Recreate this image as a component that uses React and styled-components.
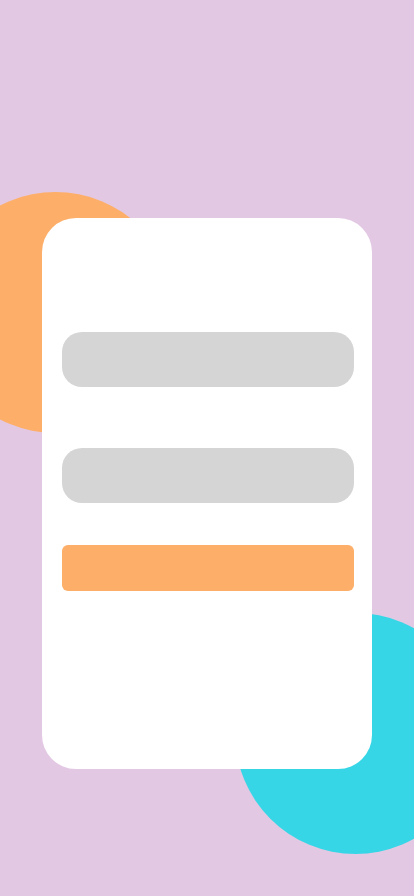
import React from 'react';
import styled, { createGlobalStyle } from 'styled-components';

const GlobalStyle = createGlobalStyle`
  html, body {
    margin: 0;
    padding: 0;
    background-color: #e3c8e3;
    font-family: "Liberation Sans", Arial, sans-serif;
  }
`;

const Page = styled.div`
  position: relative;
  width: 414px;
  height: 896px;
  overflow: hidden;
  background-color: #e3c8e3;
  display: flex;
  justify-content: center;
  padding-top: 218px;
  box-sizing: border-box;
`;

const Blob = styled.div`
  position: absolute;
  width: 241px;
  height: 241px;
  border-radius: 50%;
  background-color: ${(p) => p.color};
  left: ${(p) => p.x - 120.5}px;
  top: ${(p) => p.y - 120.5}px;
`;

const Card = styled.form`
  position: relative;
  z-index: 1;
  width: 330px;
  height: 551px;
  background-color: #ffffff;
  border-radius: 34px;
  padding: 114px 18px 0 20px;
  box-sizing: border-box;
  display: flex;
  flex-direction: column;
`;

const Field = styled.input`
  height: 55px;
  border: none;
  outline: none;
  border-radius: 20px;
  background-color: #d5d5d5;
  padding: 0 20px;
  font-size: 16px;
  margin-bottom: ${(p) => p.gap}px;
`;

const SubmitButton = styled.button`
  height: 46px;
  border: none;
  border-radius: 6px;
  background-color: #fdaf69;
  cursor: pointer;
`;

export default function App() {
  return (
    <>
      <GlobalStyle />
      <Page>
        <Blob color="#fdaf69" x={55} y={312} />
        <Blob color="#37d6e6" x={355} y={733} />
        <Card onSubmit={(e) => e.preventDefault()}>
          <Field type="text" gap={61} />
          <Field type="password" gap={42} />
          <SubmitButton type="submit" />
        </Card>
      </Page>
    </>
  );
}
